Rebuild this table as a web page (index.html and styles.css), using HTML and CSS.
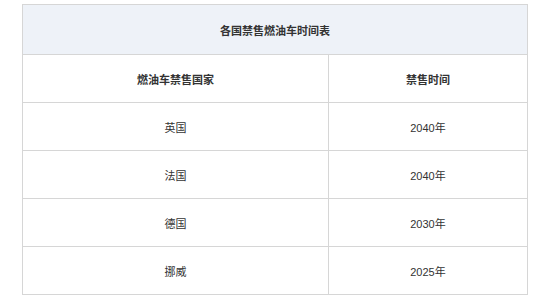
FILE: index.html
```html
<!DOCTYPE html>
<html lang="zh">
<head>
<meta charset="utf-8">
<link rel="stylesheet" href="styles.css">
</head>
<body>
<table class="ban">
  <colgroup><col class="c1"><col class="c2"></colgroup>
  <tr class="title-row"><th colspan="2" class="title">各国禁售燃油车时间表</th></tr>
  <tr class="row head-row"><th>燃油车禁售国家</th><th>禁售时间</th></tr>
  <tr class="row"><td>英国</td><td>2040年</td></tr>
  <tr class="row"><td>法国</td><td>2040年</td></tr>
  <tr class="row"><td>德国</td><td>2030年</td></tr>
  <tr class="row"><td>挪威</td><td>2025年</td></tr>
</table>
</body>
</html>
```
FILE: styles.css
```css
html, body {
  margin: 0;
  padding: 0;
  background: #fff;
}
body {
  padding: 4px 0 0 22px;
  font-family: "Liberation Sans", "Noto Sans CJK SC", sans-serif;
  font-size: 11px;
  color: #333;
}
.ban {
  border-collapse: collapse;
  width: 505px;
  table-layout: fixed;
}
.ban th, .ban td {
  border: 1px solid #d6d6d6;
  text-align: center;
  vertical-align: middle;
  padding: 0;
}
.ban th {
  font-weight: bold;
}
.title-row {
  height: 50px;
  background: #eef2f8;
}
.row {
  height: 48px;
}
.c1 {
  width: 306px;
}
.c2 {
  width: 199px;
}
```
